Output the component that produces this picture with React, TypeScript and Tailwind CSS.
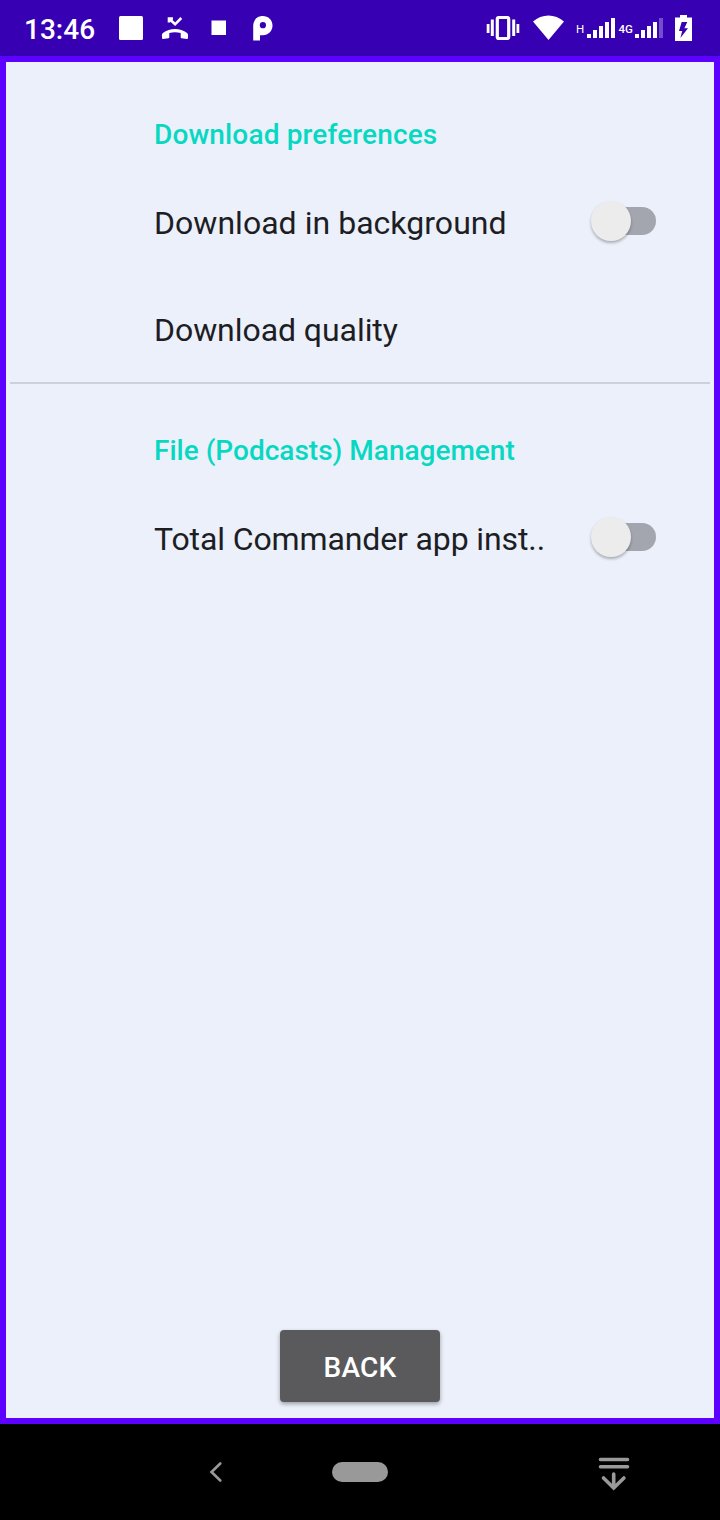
import type { ReactNode } from "react";

function StatusBar() {
  return (
    <header className="flex h-14 items-start bg-[#3700b3] text-white">
      <span className="ml-[24px] mt-[13px] w-[94px] text-[28px] font-medium leading-[34px]">13:46</span>
      <svg className="h-14 w-[160px]" viewBox="118 0 160 56" fill="currentColor">
        <rect x="119" y="16" width="24" height="24" rx="1.5" />
        <path d="M162 36.500c-.3-1.400 0-2.600.9-3.400 7-5.500 17.200-5.500 24.200 0 .9.800 1.200 2 .9 3.400v1.500c0 .7-.5 1-1.100.9l-5.300-.7c-.6-.1-.9-.5-.9-1v-4.200c-3.700-1-7.700-1-11.400 0v4.200c0 .5-.3.900-.9 1l-5.300.7c-.6.1-1.100-.2-1.100-.9z" />
        <path d="M169 22.500v-4h4M169.500 19l5.600 5.300 6.200-6.300" fill="none" stroke="currentColor" strokeWidth="2.600" />
        <rect x="211.500" y="20.500" width="14.500" height="14.500" />
        <path fillRule="evenodd" d="M253.200 40.500V26c0-6 4-10 9.600-10s9.700 4 9.700 9.500-4.100 9.700-9.700 9.700H260v5.300zM262.900 28.300a3.100 3.100 0 1 0 0-6.200a3.100 3.100 0 0 0 0 6.200z" />
      </svg>
      <svg className="ml-auto mr-6 h-14 w-[212px]" viewBox="484 0 212 56" fill="currentColor">
        <path d="M486.700 24h2.800v9h-2.800zM490.800 19.500h3v16.500h-3zM512.200 19.500h3v16.500h-3zM516.500 24h2.800v9h-2.800z" />
        <rect x="497.300" y="17.500" width="11.400" height="21" rx="1.500" fill="none" stroke="currentColor" strokeWidth="3.200" />
        <path d="M533 21.500c8.800-8 22.200-8 31 0L548.500 40z" />
        <text x="576" y="33" className="font-[Roboto] text-[11.500px]">H</text>
        <path d="M587 34h4v4h-4zM593 30h4v8h-4zM599 26h4v12h-4zM605 22h4v16h-4zM611 18h4v20h-4z" />
        <text x="618.500" y="33" className="font-[Roboto] text-[11.500px] font-medium">4G</text>
        <path d="M635 34h4v4h-4zM641 30h4v8h-4zM647 26h4v12h-4zM653 22h4v16h-4z" />
        <path d="M659 18h4v20h-4z" opacity=".3" />
        <path fillRule="evenodd" d="M680 17.500V15h7v2.500h5V41h-17V17.500zM681.700 22l-2.700 9h3.200l-1.800 7 7.600-9.800h-3.600l2.900-6.200z" />
      </svg>
    </header>
  );
}

function Heading({ children, className = "" }: { children: ReactNode; className?: string }) {
  return (
    <h2 className={`relative top-px pl-[148px] text-[28px] font-medium leading-10 text-[#08d8c2] ${className}`}>
      {children}
    </h2>
  );
}

function Switch() {
  return (
    <button role="switch" aria-checked="false" className="mr-[58px] flex h-10 w-[65px] items-center">
      <span className="z-10 size-10 shrink-0 rounded-full bg-[#ececec] shadow-[0_2px_3px_rgba(0,0,0,0.28)]" />
      <span className="-ml-5 h-7 w-[45px] rounded-r-full bg-[#a3a6ae]" />
    </button>
  );
}

function Row({ label, toggle = false, className = "" }: { label: string; toggle?: boolean; className?: string }) {
  return (
    <div className="flex h-[107px] items-center pl-[148px]">
      <span className={`flex-1 text-[32px] leading-[40px] text-[#1d1e24] ${className}`}>{label}</span>
      {toggle && (
        <div className="pb-1">
          <Switch />
        </div>
      )}
    </div>
  );
}

export default function App() {
  return (
    <div className="flex h-[1520px] w-[720px] flex-col overflow-hidden font-[Roboto,sans-serif]">
      <StatusBar />
      <main className="flex flex-1 flex-col border-[6px] border-[#5c00ff] bg-[#ebf0fb]">
        <section className="flex h-[322px] flex-col pt-[52px]">
          <Heading className="tracking-[0.14px]">Download preferences</Heading>
          <div className="mt-[15px]">
            <Row label="Download in background" toggle className="tracking-[0.03px]" />
            <Row label="Download quality" className="tracking-[-0.06px]" />
          </div>
        </section>
        <hr className="mx-1 -mt-0.5 h-0.5 border-0 bg-[#ccd1dc]" />
        <section className="pt-[46px]">
          <Heading>File (Podcasts) Management</Heading>
          <div className="mt-[15px]">
            <Row label="Total Commander app inst.." toggle className="tracking-[-0.12px]" />
          </div>
        </section>
        <button className="mx-auto mb-4 mt-auto h-[72px] w-40 rounded bg-[#5a5a5c] pt-1 text-[28px] font-medium tracking-[0.2px] text-white shadow-[0_2px_4px_rgba(0,0,0,0.35)]">
          BACK
        </button>
      </main>
      <nav className="flex h-24 items-center bg-black text-[#999999]">
        <svg className="ml-[204px] h-6 w-6" viewBox="204 1460 24 24" fill="none" stroke="currentColor" strokeWidth="2.600" strokeLinecap="round">
          <path d="M220.300 1463.500l-8.800 8.500 8.800 8.500" />
        </svg>
        <span className="ml-[104px] h-5 w-14 rounded-full bg-[#999999]" />
        <svg className="ml-[208px] h-10 w-9" viewBox="596 1452 36 40" fill="none" stroke="currentColor" strokeWidth="3.600" strokeLinecap="round">
          <path d="M600.500 1459.500h27M600.500 1466.700h27M613.700 1474v14M603.500 1478l10.200 10 10.200-10" />
        </svg>
      </nav>
    </div>
  );
}
